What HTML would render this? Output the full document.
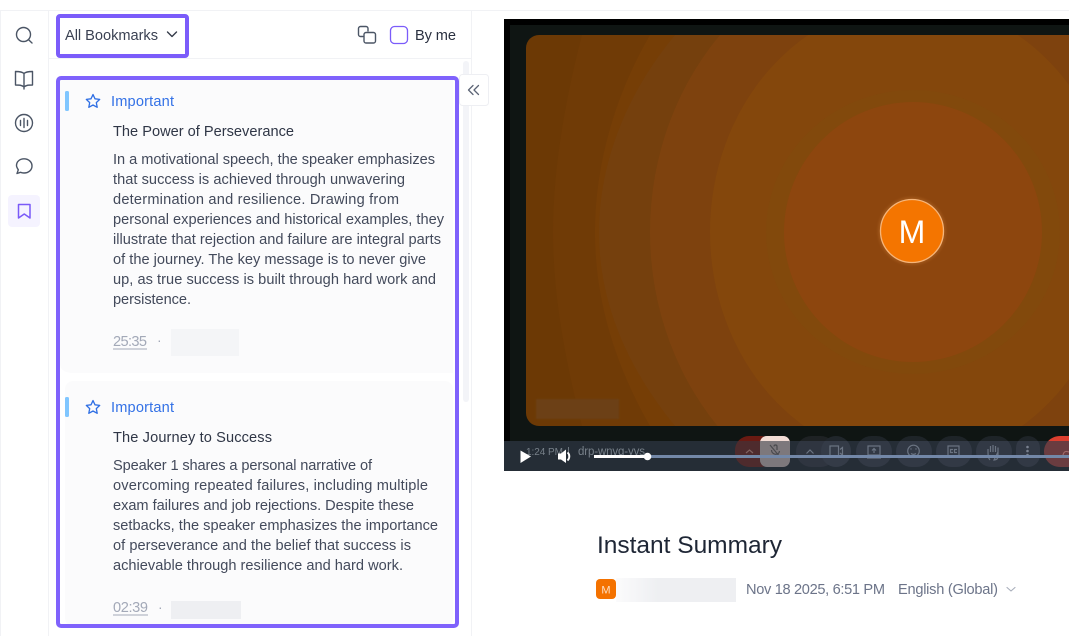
<!DOCTYPE html>
<html lang="en">
<head>
<meta charset="utf-8">
<title>Instant Summary</title>
<style>
html,body{margin:0;padding:0;background:#fff;width:1069px;height:636px;overflow:hidden}
svg{display:block;font-family:"Liberation Sans",sans-serif}
.b{font-size:14.6px;fill:#434a5b}
.t{font-size:14.6px;fill:#2f3646}
.i{font-size:14.6px;fill:#3371e6}
.ic{fill:none;stroke:#4b5565;stroke-width:1.4;stroke-linecap:round;stroke-linejoin:round}
</style>
</head>
<body>
<svg width="1069" height="636" viewBox="0 0 1069 636" xmlns="http://www.w3.org/2000/svg">
<defs>
<clipPath id="card"><path d="M539 35H1069V426H539A13 13 0 0 1 526 413V48A13 13 0 0 1 539 35Z"/></clipPath>
<clipPath id="above"><rect x="504" y="425" width="565" height="16"/></clipPath>
<clipPath id="below"><rect x="504" y="441" width="565" height="30"/></clipPath>
<linearGradient id="fade" x1="0" x2="1" y1="0" y2="0"><stop offset="0" stop-color="#fbfbfc"/><stop offset=".35" stop-color="#eeeff2"/><stop offset="1" stop-color="#eeeff2"/></linearGradient>
<filter id="bl" x="-10%" y="-10%" width="120%" height="120%"><feGaussianBlur stdDeviation=".8"/></filter>
<filter id="soft" x="-10%" y="-10%" width="120%" height="120%"><feGaussianBlur stdDeviation="1.2"/></filter>
</defs>

<!-- frame lines -->
<rect x="0" y="10" width="1069" height="1" fill="#f1f2f5"/>
<rect x="0" y="10" width="1" height="626" fill="#f1f2f5"/>
<rect x="48" y="10" width="1" height="626" fill="#f1f2f5"/>
<rect x="49" y="58" width="422" height="1" fill="#f1f2f5"/>
<rect x="471" y="10" width="1" height="626" fill="#f1f2f5"/>

<!-- rail icons -->
<g class="ic">
<circle cx="23.5" cy="34.5" r="7"/><path d="M28.6 39.8L32 43"/>
<path d="M24 73.5C22 71.6 19 71.5 15.5 71.5V85C19 85 22 85 24 87C26 85 29 85 32.5 85V71.5C29 71.5 26 71.6 24 73.5ZM24 73.5V89"/>
<circle cx="24" cy="123" r="8.5"/><path d="M20.5 120.5V125.5M24 118.5V127.5M27.5 120.5V125.5"/>
<path d="M17 173.5L18.3 169.8C17.5 168.6 16.5 167 16.5 165.5C16.5 161.4 20 158.8 24 158.8C28.4 158.8 32 161.8 32 166C32 170.2 28.4 173 24 173C22.8 173 21.5 172.8 20.5 172.3Z"/>
</g>
<rect x="8" y="195" width="32" height="32" rx="4" fill="#f5f3ff"/>
<path d="M18.5 204.5H30V218L24.25 214L18.5 218Z" fill="none" stroke="#7a5af8" stroke-width="1.5" stroke-linejoin="round"/>

<!-- toolbar -->
<rect x="58" y="16" width="129" height="40" rx="2" fill="#fff" stroke="#7b5cfa" stroke-width="4"/>
<text x="65" y="40" font-size="14.6" fill="#3a4152" textLength="93">All Bookmarks</text>
<path d="M167.5 32L172 36.5L176.5 32" fill="none" stroke="#333a48" stroke-width="1.4" stroke-linecap="round" stroke-linejoin="round"/>
<g class="ic">
<path d="M368 31V28.5C368 27.4 367.2 26.5 366 26.5H360.5C359.4 26.5 358.5 27.4 358.5 28.5V34.5C358.5 35.6 359.4 36.5 360.5 36.5H363"/>
<rect x="364" y="32.5" width="11.5" height="10.5" rx="2"/>
</g>
<rect x="390.5" y="26.5" width="17" height="17" rx="4" fill="#fff" stroke="#7b5cfa" stroke-width="1.3"/>
<text x="415" y="40" font-size="14.6" fill="#2a3040" textLength="41">By me</text>

<!-- scrollbar -->
<rect x="463" y="61" width="6" height="341" rx="3" fill="#f3f4f8"/>

<!-- cards -->
<path d="M60 80H453V373H73C66 373 60 370 60 364Z" fill="#fbfbfc"/>
<rect x="65" y="381" width="388" height="245" rx="8" fill="#fbfbfc"/>

<!-- card 1 -->
<rect x="65" y="91" width="4" height="20" rx="1.5" fill="#80c6ff"/>
<path d="M93 94.5L95 98.8L99.7 99.4L96.3 102.6L97.2 107.3L93 105L88.8 107.3L89.7 102.6L86.3 99.4L91 98.8Z" fill="none" stroke="#2f6fe4" stroke-width="1.3" stroke-linejoin="round"/>
<text class="i" x="111" y="106" textLength="63">Important</text>
<text class="t" x="113" y="136" textLength="181">The Power of Perseverance</text>
<text class="b" x="113" y="164" textLength="322">In a motivational speech, the speaker emphasizes</text>
<text class="b" x="113" y="184" textLength="292">that success is achieved through unwavering</text>
<text class="b" x="113" y="204" textLength="286">determination and resilience. Drawing from</text>
<text class="b" x="113" y="224" textLength="331">personal experiences and historical examples, they</text>
<text class="b" x="113" y="244" textLength="328">illustrate that rejection and failure are integral parts</text>
<text class="b" x="113" y="264" textLength="313">of the journey. The key message is to never give</text>
<text class="b" x="113" y="284" textLength="323">up, as true success is built through hard work and</text>
<text class="b" x="113" y="304" textLength="78">persistence.</text>
<text x="113" y="346" font-size="14.6" fill="#a3a9b8" textLength="34">25:35</text>
<rect x="113" y="348.5" width="34" height="1" fill="#a3a9b8"/>
<text x="157" y="345" font-size="14" fill="#a3a9b8">·</text>
<rect x="171" y="329" width="68" height="27" fill="#f4f5f7"/>

<!-- card 2 -->
<rect x="65" y="397" width="4" height="20" rx="1.5" fill="#80c6ff"/>
<path d="M93 400.5L95 404.8L99.7 405.4L96.3 408.6L97.2 413.3L93 411L88.8 413.3L89.7 408.6L86.3 405.4L91 404.8Z" fill="none" stroke="#2f6fe4" stroke-width="1.3" stroke-linejoin="round"/>
<text class="i" x="111" y="412" textLength="63">Important</text>
<text class="t" x="113" y="442" textLength="159">The Journey to Success</text>
<text class="b" x="113" y="470" textLength="259">Speaker 1 shares a personal narrative of</text>
<text class="b" x="113" y="490" textLength="315">overcoming repeated failures, including multiple</text>
<text class="b" x="113" y="510" textLength="301">exam failures and job rejections. Despite these</text>
<text class="b" x="113" y="530" textLength="325">setbacks, the speaker emphasizes the importance</text>
<text class="b" x="113" y="550" textLength="298">of perseverance and the belief that success is</text>
<text class="b" x="113" y="570" textLength="290">achievable through resilience and hard work.</text>
<text x="113" y="612" font-size="14.6" fill="#a3a9b8" textLength="35">02:39</text>
<rect x="113" y="614.5" width="35" height="1" fill="#a3a9b8"/>
<text x="158" y="612" font-size="14" fill="#a3a9b8">·</text>
<rect x="171" y="601" width="70" height="18" fill="#eeeff2"/>

<!-- highlight -->
<rect x="58" y="78" width="399" height="548" rx="3" fill="none" stroke="#7f62fc" stroke-width="4"/>

<!-- collapse -->
<rect x="459.5" y="74.5" width="29" height="31" rx="3" fill="#fff" stroke="#eeeff3"/>
<path d="M473 85.5L468.5 90L473 94.5M478.5 85.5L474 90L478.5 94.5" fill="none" stroke="#5b6475" stroke-width="1.3" stroke-linecap="round" stroke-linejoin="round"/>

<!-- video -->
<rect x="504" y="19" width="565" height="452" fill="#000"/>
<rect x="510" y="25" width="559" height="446" fill="#0f1513"/>
<g clip-path="url(#card)">
<rect x="526" y="35" width="543" height="391" fill="#6c3905"/>
<path d="M582 35C565 100 553 170 553 232C553 295 565 360 582 426H1069V35Z" fill="#703b06"/>
<path d="M650 35C615 95 595 165 595 232C595 300 615 365 650 426H1069V35Z" fill="#763e06"/>
<path d="M675 35C625 95 599 165 599 232C599 300 625 365 675 426H1069V35Z" fill="#75400d"/>
<ellipse cx="913" cy="232" rx="263" ry="290" fill="#7e420e"/>
<ellipse cx="913" cy="232" rx="203" ry="230" fill="#84470c"/>
<ellipse cx="913" cy="232" rx="147" ry="142" fill="#82490c"/>
<ellipse cx="913" cy="232" rx="129" ry="130" fill="#8d460e"/>
<rect x="536" y="399" width="83" height="20" fill="#6c4118" filter="url(#bl)"/>
</g>
<circle cx="912" cy="231" r="34" fill="#f5a050" opacity=".18" filter="url(#soft)"/>
<circle cx="912" cy="231" r="31.5" fill="#f47500" stroke="#f5b57a" stroke-width="1.3"/>
<text x="912" y="243" font-size="32" fill="#fff" text-anchor="middle" textLength="25">M</text>

<!-- control bar -->
<rect x="504" y="441" width="565" height="30" fill="#252d36"/>

<g clip-path="url(#above)">
<rect x="735" y="436" width="40" height="31" rx="14" fill="#6a1a12"/>
<rect x="796" y="436" width="40" height="31" rx="15.5" fill="#1e2224"/>
<rect x="821" y="436" width="30" height="31" rx="15" fill="#20262b"/>
<rect x="856" y="436" width="36" height="31" rx="15.5" fill="#1e2428"/>
<rect x="896" y="436" width="36" height="31" rx="15.5" fill="#1e2428"/>
<rect x="936" y="436" width="36" height="31" rx="15.5" fill="#1e2428"/>
<rect x="976" y="436" width="36" height="31" rx="15.5" fill="#1e2428"/>
<rect x="1016" y="436" width="24" height="31" rx="12" fill="#1e2428"/>
<path d="M1060 436H1069V467H1060C1051 467 1044 460 1044 451.5C1044 443 1051 436 1060 436Z" fill="#dc3f2f"/>
</g>
<g clip-path="url(#below)">
<rect x="735" y="436" width="40" height="31" rx="14" fill="#4e2b2d"/>
<rect x="796" y="436" width="40" height="31" rx="15.5" fill="#2f3540"/>
<rect x="821" y="436" width="30" height="31" rx="15" fill="#343b47"/>
<rect x="856" y="436" width="36" height="31" rx="15.5" fill="#323945"/>
<rect x="896" y="436" width="36" height="31" rx="15.5" fill="#323945"/>
<rect x="936" y="436" width="36" height="31" rx="15.5" fill="#323945"/>
<rect x="976" y="436" width="36" height="31" rx="15.5" fill="#323945"/>
<rect x="1016" y="436" width="24" height="31" rx="12" fill="#323945"/>
<path d="M1060 436H1069V467H1060C1051 467 1044 460 1044 451.5C1044 443 1051 436 1060 436Z" fill="#6a3c40"/>
</g>
<rect x="760" y="436" width="30" height="31" rx="7" fill="#7d787c"/>
<path d="M760 441V443C760 439 763 436 767 436H783C787 436 790 439 790 443V441Z" fill="#f2dcd5"/>
<path d="M746 453L749.5 450L753 453" fill="none" stroke="#806260" stroke-width="1.2"/>
<g fill="none" stroke="#4a4a4e" stroke-width="1.2">
<path d="M770 445L780 457M774 446.500C774 444.500 777 444.500 777 446.500V450M771.500 450C771.500 455 779 456 779.500 451M775.500 455V458"/>
</g>
<g fill="none" stroke="#6b7482" stroke-width="1.2">
<path d="M806.5 453.5L810 450L813.5 453.5"/>
<rect x="830" y="446" width="8.5" height="10.5"/><path d="M840 449.5L842.5 447.5V455L840 453"/>
<rect x="868" y="446" width="12" height="9"/><path d="M867 458H881"/>
<path d="M874 453V448.5M872 450.5L874 448.5L876 450.5"/>
<circle cx="913.5" cy="451" r="5.8"/><path d="M911 453.5C912.5 454.5 914.5 454.5 916 453.5"/>
<rect x="948" y="446" width="11" height="10"/><path d="M953 449.5H950.5V452.5H953M957 449.5H954.5V452.5H957"/>
<path d="M990 460C988 458 988 455 988 452V449M990.5 452V446M993 452V445M995.5 452V446M998 452V447.5V456C998 459 996 460 994 460Z"/>
<path d="M1063 455C1064 451 1066 451 1069 452" stroke="#a06a6a"/>
</g>
<g fill="#7a8290"><circle cx="1027.5" cy="447" r="1.3"/><circle cx="1027.5" cy="451" r="1.3"/><circle cx="1027.5" cy="455" r="1.3"/></g>
<circle cx="911" cy="449" r=".7" fill="#6b7482"/><circle cx="916" cy="449" r=".7" fill="#6b7482"/>
<text x="526" y="455" font-size="10" fill="#778089" textLength="37">1:24 PM</text>
<text x="567" y="455" font-size="11" fill="#778089">|</text>
<text x="578" y="455" font-size="11.5" fill="#778089" textLength="67">drp-wnvg-yvs</text>
<rect x="594" y="455" width="475" height="3" fill="#7388a8"/>
<rect x="594" y="455" width="54" height="3" fill="#fff"/>
<circle cx="647.5" cy="456.5" r="3.8" fill="#fff"/>
<path d="M520.5 450.5L531 456.5L520.5 463Z" fill="#fff"/>
<path d="M558 453.5H561L566 449.5V463L561 459.5H558Z" fill="#fff"/>
<path d="M567.5 452.5C570 454.5 570 458 567.5 460.5" fill="none" stroke="#fff" stroke-width="1.8"/>

<!-- summary -->
<text x="597" y="553" font-size="24.5" fill="#1e2635" textLength="185">Instant Summary</text>
<rect x="616" y="578" width="120" height="24" fill="url(#fade)"/>
<rect x="596" y="579" width="20" height="20" rx="4" fill="#f47200"/>
<text x="606" y="593.5" font-size="11" fill="#fde0c4" text-anchor="middle">M</text>
<text x="746" y="594" font-size="14.6" fill="#6c7489" textLength="139">Nov 18 2025, 6:51 PM</text>
<text x="898" y="594" font-size="14.6" fill="#6c7489" textLength="100">English (Global)</text>
<path d="M1007 587.5L1011 591L1015 587.5" fill="none" stroke="#a7adba" stroke-width="1.1" stroke-linecap="round" stroke-linejoin="round"/>
</svg>
</body>
</html>
